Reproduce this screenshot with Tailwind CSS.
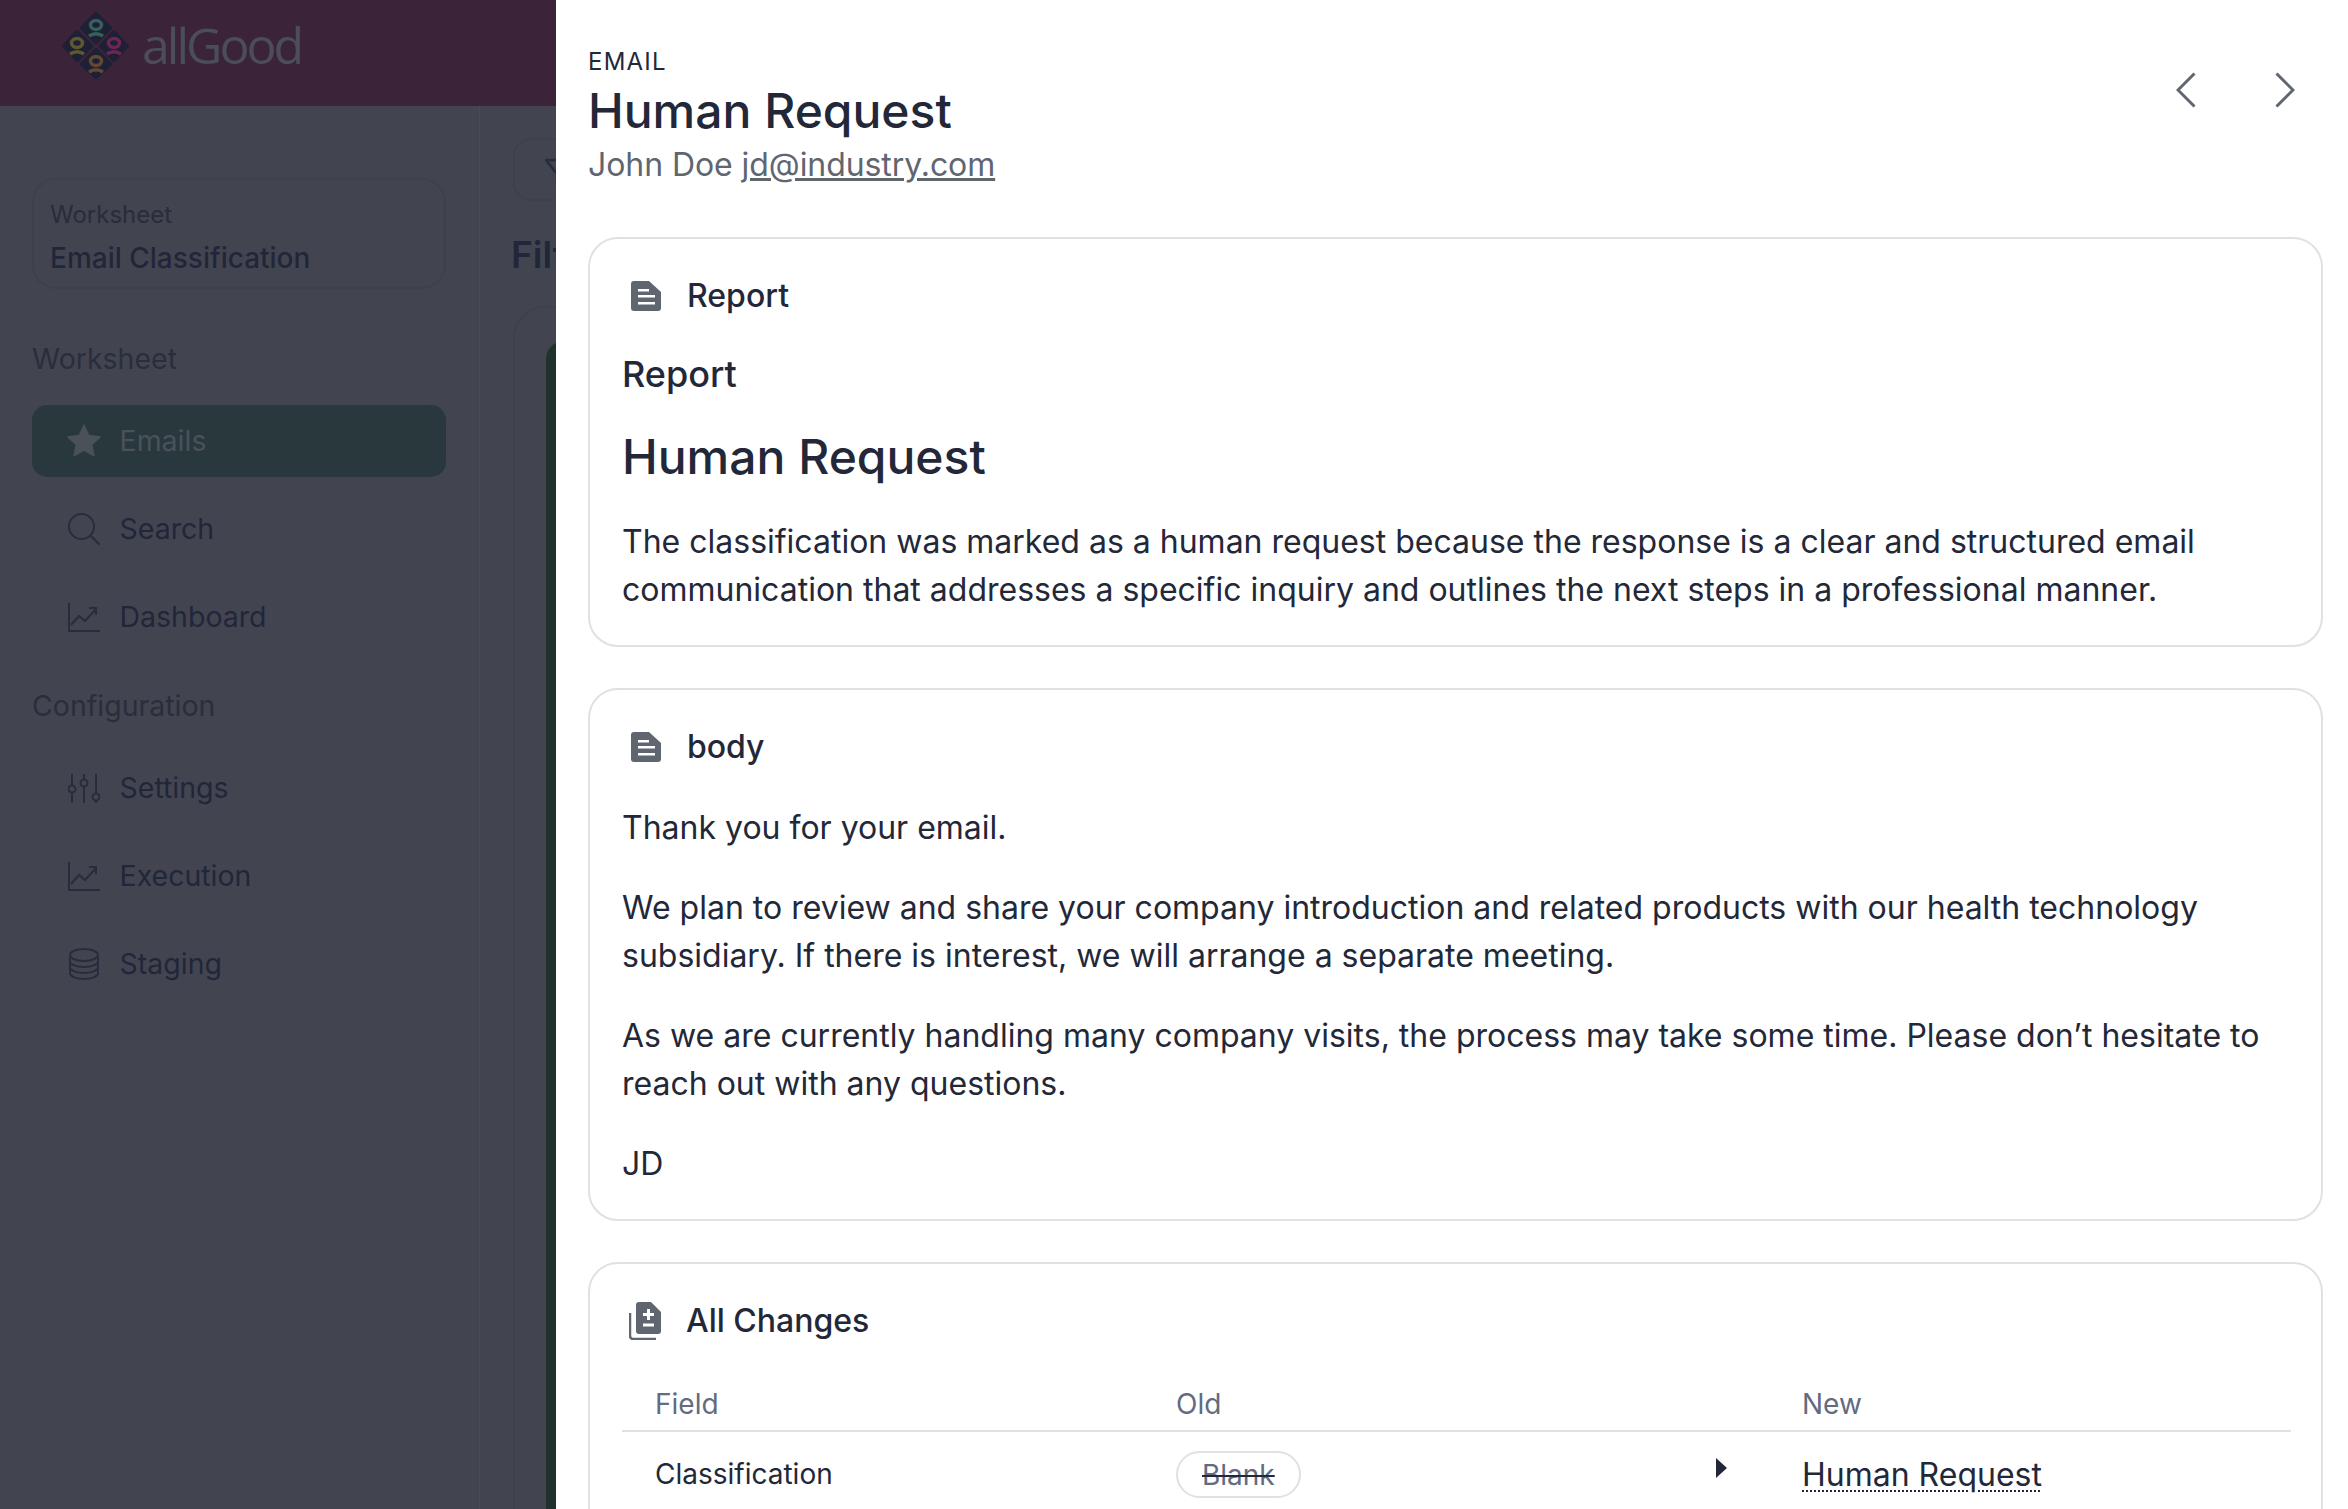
<!DOCTYPE html>
<html lang="en">
<head>
    <meta charset="UTF-8">
    <meta name="viewport" content="width=device-width, initial-scale=1.0">
    <title>allGood - Email Classification</title>
    <script src="https://cdn.jsdelivr.net/npm/@tailwindcss/browser@4"></script>
</head>
<body class="bg-[#42454f] font-['Inter',sans-serif]">
<div class="relative w-[2348px] h-[1509px] overflow-hidden flex flex-col">
    <!-- Top bar -->
    <header class="h-[106px] shrink-0 bg-[#3b2339] flex items-center pl-[62px]">
        <svg width="67" height="67" viewBox="0 0 67 67" class="shrink-0 mt-[-15px]">
            <g fill="#1e2036" stroke="#1e2036" stroke-width="4" stroke-linejoin="round">
                <path d="M34 2 L48 16 L34 30 L20 16Z"/>
                <path d="M15 20 L29 34 L15 48 L2 34Z"/>
                <path d="M52 20 L65 34 L52 48 L39 34Z"/>
                <path d="M34 38 L48 52 L34 65 L20 52Z"/>
            </g>
            <g fill="none" stroke-width="3.500">
                <ellipse cx="34" cy="13" rx="5.500" ry="4.500" stroke="#36605a"/>
                <path d="M27 24 q7 -4.500 14 0" stroke="#36605a"/>
                <ellipse cx="15" cy="31" rx="5.500" ry="4.500" stroke="#5f5732"/>
                <path d="M8 42 q7 -4.500 14 0" stroke="#5f5732"/>
                <ellipse cx="52" cy="31" rx="5.500" ry="4.500" stroke="#6b2651"/>
                <path d="M45 42 q7 -4.500 14 0" stroke="#6b2651"/>
                <ellipse cx="34" cy="49" rx="5.500" ry="4.500" stroke="#624933"/>
                <path d="M27 60 q7 -4.500 14 0" stroke="#624933"/>
            </g>
            <g fill="#1e2036">
                <circle cx="34" cy="27" r="3"/>
                <circle cx="15" cy="45" r="3"/>
                <circle cx="52" cy="45" r="3"/>
                <circle cx="34" cy="63" r="3"/>
            </g>
        </svg>
        <span class="ml-[13px] mt-[-17px] text-[#4b4e59] text-[50px] leading-[60px] font-medium tracking-[-3px] font-['Open_Sans',sans-serif]">allGood</span>
    </header>

    <div class="flex flex-1 min-h-0">
        <!-- Sidebar -->
        <aside class="w-[480px] shrink-0 border-r border-[#484b55] pl-[32px] pr-[33px] pt-[72px]">
            <div class="h-[111px] rounded-[24px] border-2 border-[#3e414b] pl-[16px] pt-[17px]">
                <div class="text-[24px] leading-[36px] text-[#282c3c]">Worksheet</div>
                <div class="text-[28px] leading-[40px] font-medium text-[#22263a] mt-[5px]">Email Classification</div>
            </div>

            <div class="mt-[50px] h-[40px] text-[28.500px] leading-[40px] text-[#2a2e3c]">Worksheet</div>
            <nav class="mt-[26px] flex flex-col gap-[16px]">
                <a class="h-[72px] rounded-[15px] bg-[#29383d] flex items-center pl-[34px] gap-[17.500px] text-[28.500px] text-[#4b5159]">
                    <svg width="36" height="36" viewBox="0 0 24 24" fill="#4b5159"><path d="M12 1.500l3.200 6.900 7.500.9-5.600 5.100 1.500 7.400L12 18.100l-6.600 3.700 1.500-7.400L1.300 9.300l7.500-.9z" stroke="#4b5159" stroke-linejoin="round"/></svg>
                    Emails
                </a>
                <a class="h-[72px] flex items-center pl-[36px] gap-[19.500px] text-[28.500px] text-[#22263a]">
                    <svg width="32" height="32" viewBox="0 0 32 32" fill="none" stroke="#282c3d" stroke-width="2"><circle cx="13.500" cy="13.500" r="12.500"/><path d="M22.500 22.500L31.500 31.500"/></svg>
                    Search
                </a>
                <a class="h-[72px] flex items-center pl-[36px] gap-[19.500px] text-[28.500px] text-[#22263a]">
                    <svg width="32" height="32" viewBox="0 0 32 32" fill="none" stroke="#282c3d" stroke-width="2"><path d="M1 2V30H32"/><path d="M3 24L11 15L17 20L28 8"/><path d="M21 7H28V14"/></svg>
                    Dashboard
                </a>
            </nav>

            <div class="mt-[33px] h-[40px] text-[28.500px] leading-[40px] text-[#2a2e3c]">Configuration</div>
            <nav class="mt-[26px] flex flex-col gap-[16px]">
                <a class="h-[72px] flex items-center pl-[36px] gap-[19.500px] text-[28.500px] text-[#22263a]">
                    <svg width="32" height="32" viewBox="0 0 32 32" fill="none" stroke="#282c3d" stroke-width="2"><path d="M4 2V13M4 21V31M16 2V7M16 15V31M28 2V21M28 29V31"/><circle cx="4" cy="17" r="3.500"/><circle cx="16" cy="11" r="3.500"/><circle cx="28" cy="25" r="3.500"/></svg>
                    Settings
                </a>
                <a class="h-[72px] flex items-center pl-[36px] gap-[19.500px] text-[28.500px] text-[#22263a]">
                    <svg width="32" height="32" viewBox="0 0 32 32" fill="none" stroke="#282c3d" stroke-width="2"><path d="M1 2V30H32"/><path d="M3 24L11 15L17 20L28 8"/><path d="M21 7H28V14"/></svg>
                    Execution
                </a>
                <a class="h-[72px] flex items-center pl-[36px] gap-[19.500px] text-[28.500px] text-[#22263a]">
                    <svg width="32" height="32" viewBox="0 0 32 32" fill="none" stroke="#282c3d" stroke-width="2"><ellipse cx="16" cy="7" rx="14" ry="6"/><path d="M2 7V25C2 28.500 8.500 31 16 31S30 28.500 30 25V7"/><path d="M2 13C2 16.500 8.500 19 16 19S30 16.500 30 13M2 19C2 22.500 8.500 25 16 25S30 22.500 30 19"/></svg>
                    Staging
                </a>
            </nav>
        </aside>

        <!-- Main area, mostly behind the drawer -->
        <main class="flex-1 pl-[33px] pt-[32px]">
            <div class="w-[200px] h-[63px] rounded-[18px] border-2 border-[#3e414b] flex items-center pl-[30px]">
                <svg width="32" height="32" viewBox="0 0 32 32" fill="none" stroke="#282c3d" stroke-width="2.500" class="mt-[8px]"><path d="M1 2H31L20 16V30L12 25V16Z"/></svg>
            </div>
            <h2 class="mt-[32px] ml-[-2px] text-[37px] leading-[44px] font-semibold text-[#22263a]">Filter</h2>
            <div class="mt-[29px] h-[1300px] rounded-t-[32px] border-2 border-[#3e414b] pl-[31px] pt-[33px]">
                <div class="h-[1200px] rounded-tl-[18px] bg-[#21322e]"></div>
            </div>
        </main>
    </div>

    <!-- Email drawer -->
    <section class="absolute left-[556px] right-0 top-0 bottom-0 bg-white pl-[32px] pr-[25px] pt-[46px] overflow-hidden text-[#232839]">
        <div class="flex justify-between">
            <div>
                <div class="text-[24px] leading-[32px] tracking-[1.200px]">EMAIL</div>
                <h1 class="mt-[5px] text-[48px] leading-[56px] font-medium">Human Request</h1>
                <div class="mt-[6px] text-[32px] leading-[40px] tracking-[-0.070px] text-[#5f6670]">John Doe <a class="underline">jd@industry.com</a></div>
            </div>
            <div class="flex gap-[79px] pt-[26px] pr-[28px]">
                <svg width="20" height="36" viewBox="0 0 20 36" fill="none" stroke="#5f6670" stroke-width="3"><path d="M18.500 1.500L2 18L18.500 34.500"/></svg>
                <svg width="20" height="36" viewBox="0 0 20 36" fill="none" stroke="#5f6670" stroke-width="3"><path d="M1.500 1.500L18 18L1.500 34.500"/></svg>
            </div>
        </div>

        <div class="mt-[52px] h-[410px] rounded-[30px] border-2 border-[#e0e0e6] px-[32px] pt-[37px]">
            <div class="h-[40px] flex items-center pl-[9px] gap-[26px] text-[32px] font-medium">
                <svg width="30" height="30" viewBox="0 0 30 30"><path d="M3 0H18L30 11V27A3 3 0 0 1 27 30H3A3 3 0 0 1 0 27V3A3 3 0 0 1 3 0Z" fill="#5f6670"/><path d="M7 8H18V10.600H7ZM7 14H24V16.600H7ZM7 21H24V23.600H7Z" fill="#fff"/></svg>
                Report
            </div>
            <div class="mt-[34px] text-[36px] leading-[48px] font-medium">Report</div>
            <h2 class="mt-[29px] text-[48px] leading-[60px] font-medium">Human Request</h2>
            <p class="mt-[31px] text-[32px] leading-[48px]">The classification was marked as a human request because the response is a clear and structured email communication that addresses a specific inquiry and outlines the next steps in a professional manner.</p>
        </div>

        <div class="mt-[41px] h-[533px] rounded-[30px] border-2 border-[#e0e0e6] px-[32px] pt-[37px]">
            <div class="h-[40px] flex items-center pl-[9px] gap-[26px] text-[32px] font-medium">
                <svg width="30" height="30" viewBox="0 0 30 30"><path d="M3 0H18L30 11V27A3 3 0 0 1 27 30H3A3 3 0 0 1 0 27V3A3 3 0 0 1 3 0Z" fill="#5f6670"/><path d="M7 8H18V10.600H7ZM7 14H24V16.600H7ZM7 21H24V23.600H7Z" fill="#fff"/></svg>
                body
            </div>
            <div class="mt-[37px] flex flex-col gap-[32px] text-[32px] leading-[48px]">
                <p>Thank you for your email.</p>
                <p>We plan to review and share your company introduction and related products with our health technology subsidiary. If there is interest, we will arrange a separate meeting.</p>
                <p>As we are currently handling many company visits, the process may take some time. Please don’t hesitate to reach out with any questions.</p>
                <p>JD</p>
            </div>
        </div>

        <div class="mt-[41px] h-[400px] rounded-[30px] border-2 border-[#e0e0e6] pl-[32px] pr-[30px] pt-[37px]">
            <div class="h-[40px] flex items-center pl-[7px] gap-[25px] text-[32px] font-medium">
                <svg width="32" height="38" viewBox="0 0 32 38"><path d="M10 0H22L32 10V29A3 3 0 0 1 29 32H10A3 3 0 0 1 7 29V3A3 3 0 0 1 10 0Z" fill="#5f6670"/><path d="M18 7H21V11H25V14H21V18H18V14H14V11H18ZM14 21.500H25V24.500H14Z" fill="#fff"/><path d="M1 11V34A3 3 0 0 0 4 37H27" fill="none" stroke="#5f6670" stroke-width="2.500"/></svg>
                All Changes
            </div>
            <table class="mt-[43px] w-full table-fixed text-[28px] text-left">
                <thead class="text-[#626b7f]">
                    <tr class="border-b-2 border-[#e0e0e6]">
                        <th class="w-[521px] pl-[33px] pb-[6px] font-normal leading-[40px]">Field</th>
                        <th class="w-[540px] pl-[33px] pb-[6px] font-normal leading-[40px]">Old</th>
                        <th class="w-[86px]"></th>
                        <th class="pl-[33px] pb-[6px] font-normal leading-[40px]">New</th>
                    </tr>
                </thead>
                <tbody>
                    <tr>
                        <td class="pl-[33px] pt-[19px] align-top leading-[47px]">Classification</td>
                        <td class="pl-[33px] pt-[19px] align-top">
                            <span class="inline-flex items-center h-[47px] px-[24px] rounded-full border-2 border-[#e0e0e6] text-[#626b7f] line-through decoration-[#232839]">Blank</span>
                        </td>
                        <td class="pl-[33px] pt-[26px] align-top">
                            <svg width="11" height="20" viewBox="0 0 11 20" fill="#232839" class="block"><path d="M0 0L11 10L0 20Z"/></svg>
                        </td>
                        <td class="pl-[33px] pt-[19px] align-top leading-[47px]">
                            <span class="text-[32px] underline decoration-dotted decoration-2 underline-offset-[4px]">Human Request</span>
                        </td>
                    </tr>
                </tbody>
            </table>
        </div>
    </section>
</div>
</body>
</html>
